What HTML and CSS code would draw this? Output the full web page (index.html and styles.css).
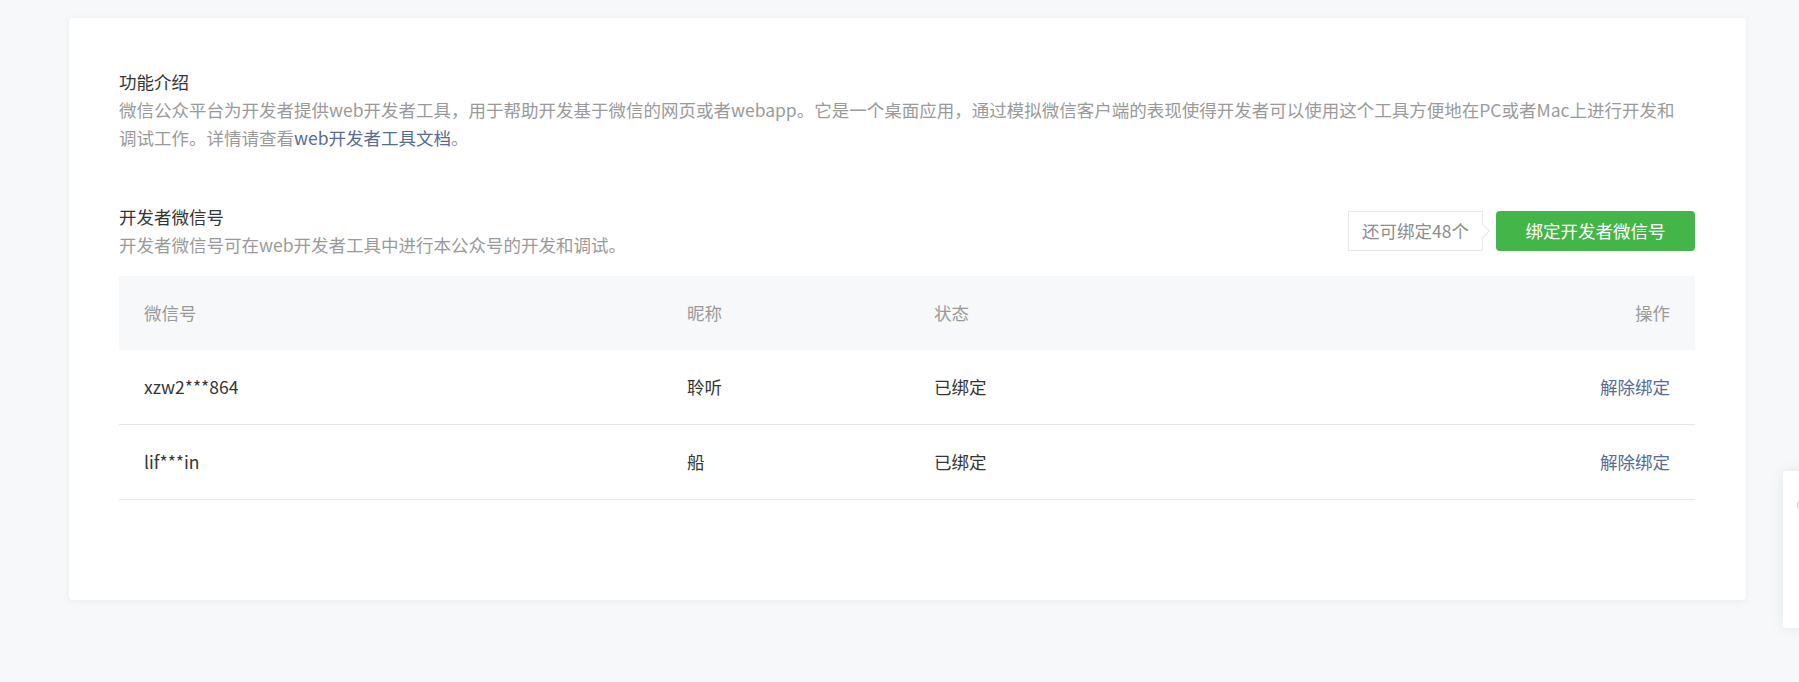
FILE: index.html
```html
<!DOCTYPE html>
<html lang="zh-CN">
<head>
<meta charset="utf-8">
<title>开发者工具</title>
<link rel="stylesheet" href="styles.css">
</head>
<body>
<div class="page">
  <div class="card">
    <section class="intro">
      <h3 class="title">功能介绍</h3>
      <p class="desc intro-desc">微信公众平台为开发者提供web开发者工具，用于帮助开发基于微信的网页或者webapp。它是一个桌面应用，通过模拟微信客户端的表现使得开发者可以使用这个工具方便地在PC或者Mac上进行开发和调试工作。详情请查看<a class="link" href="#">web开发者工具文档</a>。</p>
    </section>
    <section class="devs">
      <div class="devs-head">
        <div class="devs-info">
          <h3 class="title">开发者微信号</h3>
          <p class="desc">开发者微信号可在web开发者工具中进行本公众号的开发和调试。</p>
        </div>
        <div class="actions">
          <span class="tag">还可绑定48个</span>
          <a class="btn" href="#">绑定开发者微信号</a>
        </div>
      </div>
      <table class="table">
        <colgroup>
          <col class="c1"><col class="c2"><col class="c3"><col class="c4">
        </colgroup>
        <thead>
          <tr><th>微信号</th><th>昵称</th><th>状态</th><th class="r">操作</th></tr>
        </thead>
        <tbody>
          <tr><td>xzw2***864</td><td>聆听</td><td>已绑定</td><td class="r"><a class="link" href="#">解除绑定</a></td></tr>
          <tr><td>lif***in</td><td>船</td><td>已绑定</td><td class="r"><a class="link" href="#">解除绑定</a></td></tr>
        </tbody>
      </table>
    </section>
  </div>
</div>
<div class="side-panel"><span class="side-icon"></span></div>
</body>
</html>
```

FILE: styles.css
```css
html, body {
  margin: 0;
  padding: 0;
}
body {
  background: #f6f8f9;
  font-family: "Noto Sans CJK SC", "Noto Sans", sans-serif;
  font-size: 17.5px;
  line-height: 28px;
  color: #353535;
  height: 682px;
  overflow: hidden;
}
.page {
  padding: 18px 53px 0 69px;
}
.card {
  background: #fff;
  border-radius: 4px;
  box-shadow: 0 1px 6px rgba(150, 160, 170, 0.12);
  padding: 50px 51px 100px 50px;
}
.title {
  margin: 0;
  font-size: 17.5px;
  font-weight: normal;
  line-height: 28px;
  color: #353535;
}
.desc {
  margin: 0;
  color: #9a9a9a;
  line-height: 28px;
}
.intro-desc {
  max-width: 1568px;
}
.link {
  color: #576b95;
  text-decoration: none;
}
.devs {
  margin-top: 51px;
}
.devs-head {
  display: flex;
  align-items: center;
  justify-content: space-between;
}
.actions {
  display: flex;
  align-items: center;
  gap: 13px;
}
.tag {
  position: relative;
  box-sizing: border-box;
  height: 40px;
  line-height: 38px;
  padding: 0 13px;
  border: 1px solid #e7e7eb;
  background: #fff;
  color: #8d8d8d;
}
.tag::after {
  content: "";
  position: absolute;
  right: -6px;
  top: 14px;
  width: 9px;
  height: 9px;
  background: #fff;
  border-top: 1px solid #e7e7eb;
  border-right: 1px solid #e7e7eb;
  transform: rotate(45deg);
}
.btn {
  display: inline-block;
  box-sizing: border-box;
  height: 40px;
  line-height: 40px;
  width: 199px;
  text-align: center;
  background: #44b549;
  color: #fff;
  border-radius: 4px;
  text-decoration: none;
}
.table {
  margin-top: 17px;
  width: 100%;
  border-collapse: collapse;
  table-layout: fixed;
}
.c1 { width: 543px; }
.c2 { width: 247px; }
.table th {
  background: #f6f8f9;
  color: #9a9a9a;
  font-weight: normal;
  text-align: left;
  height: 74px;
  padding: 0 25px;
}
.table td {
  height: 74px;
  padding: 0 25px;
  border-bottom: 1px solid #e7e7eb;
  color: #353535;
}
.table .r {
  text-align: right;
}
.side-panel {
  position: fixed;
  left: 1783px;
  top: 471px;
  width: 60px;
  height: 157px;
  background: #fff;
  border-radius: 4px 0 0 4px;
  box-shadow: 0 0 12px rgba(150, 160, 170, 0.18);
}
.side-icon {
  position: absolute;
  left: 14px;
  top: 28px;
  width: 10px;
  height: 10px;
  border: 1px solid #c8c8c8;
  border-radius: 50%;
}
```
